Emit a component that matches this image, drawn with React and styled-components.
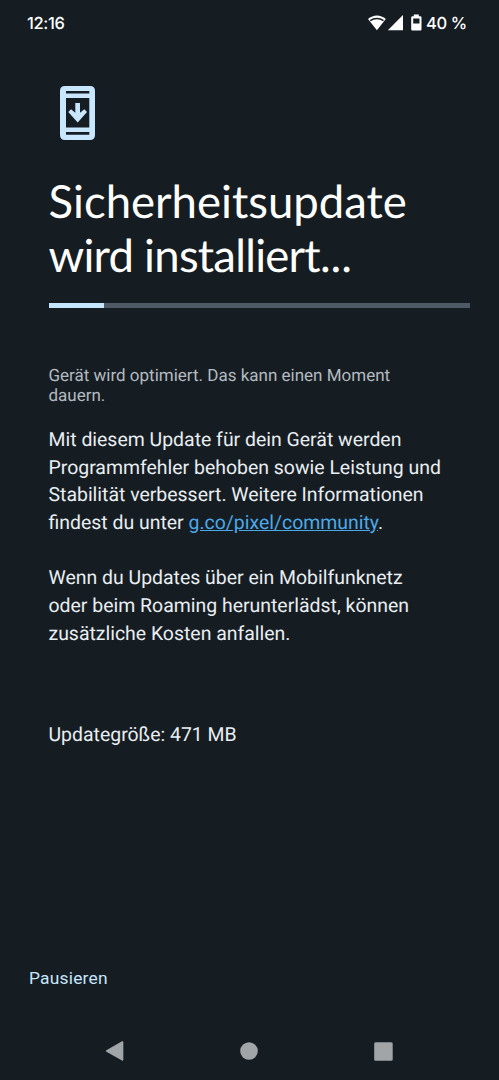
import React from "react";
import styled, { createGlobalStyle } from "styled-components";

const GlobalStyle = createGlobalStyle`
  * {
    box-sizing: border-box;
  }
  body {
    margin: 0;
    background: #161d22;
    text-rendering: geometricPrecision;
  }
`;

const Screen = styled.div`
  display: flex;
  flex-direction: column;
  width: 499px;
  height: 1080px;
  overflow: hidden;
  background: #161d22;
  color: #e9eef2;
  font-family: Roboto, "Liberation Sans", sans-serif;
`;

const StatusBar = styled.header`
  display: flex;
  align-items: center;
  justify-content: space-between;
  height: 45px;
  padding: 0 34px 0 27px;
  color: #fff;
  font-family: Inter, Roboto, sans-serif;
  font-size: 16.5px;
  font-weight: 500;
`;

const Clock = styled.span`
  letter-spacing: -0.35px;
`;

const StatusIcons = styled.div`
  display: flex;
  align-items: center;
`;

const Battery = styled.span`
  width: 39px;
  margin-left: 4px;
  letter-spacing: -0.4px;
  white-space: nowrap;
`;

const Content = styled.main`
  flex: 1;
  padding: 41px 29px 0 48.5px;
`;

const UpdateIcon = styled.svg`
  display: block;
  margin-left: 11.5px;
`;

const Title = styled.h1`
  margin: 34px 0 0;
  color: #fff;
  font-family: Lato, "Open Sans", sans-serif;
  font-size: 45.5px;
  font-weight: 400;
  line-height: 53.5px;
  white-space: nowrap;
`;

const TitleLine = styled.span`
  display: block;
  letter-spacing: ${(props) => props.$spacing || 0}px;
`;

const Dots = styled.span`
  letter-spacing: -0.1px;
`;

const Track = styled.div`
  height: 5px;
  margin-top: 22.4px;
  background: #4d5964;
`;

const Bar = styled.div`
  height: 100%;
  background: #c5e5fd;
`;

const Hint = styled.p`
  margin: 57.6px 0 0;
  color: #b3bac0;
  font-size: 17px;
  line-height: 20px;
  white-space: nowrap;
`;

const Text = styled.p`
  margin: ${(props) => props.$top}px 0 0;
  font-size: 19.44px;
  line-height: 27.7px;
  white-space: nowrap;
`;

const Link = styled.a`
  color: #4ca9e8;
  text-decoration: underline;
`;

const Footer = styled.footer`
  display: flex;
  align-items: center;
  height: 44px;
  padding-left: 29px;
`;

const PauseButton = styled.button`
  padding: 0;
  border: 0;
  background: none;
  color: #c5e5fd;
  font-family: inherit;
  font-size: 17.4px;
  font-weight: 400;
  letter-spacing: 0.2px;
`;

const NavBar = styled.nav`
  display: flex;
  align-items: center;
  justify-content: space-between;
  height: 58px;
  margin-top: 22px;
  padding: 0 106.500px 0 105px;
`;

const App = () => {
  const progress = 13.1;

  return (
    <Screen>
      <GlobalStyle />
      <StatusBar>
        <Clock>12:16</Clock>
        <StatusIcons>
          {/* wifi, signal, battery */}
          <svg width="54" height="18" viewBox="0 0 54 18" fill="#fff">
            <path d="M0 5C5.300 0.300 12.600 0.300 17.800 5L8.900 16.300Z" />
            <path
              d="M2.200 6.600C6.100 3.800 11.600 3.800 15.500 6.600"
              fill="none"
              stroke="#161d22"
              strokeWidth="1.4"
            />
            <path d="M35 1V16.300H19.800Z" />
            <path d="M45.800 0.500h5v1.800h1.500q1.200 0 1.200 1.200v11.800q0 1.200-1.200 1.200h-7.900q-1.200 0-1.200-1.200V3.500q0-1.200 1.200-1.200h1.400z" />
            <path d="M45.200 4.500h6.300v5h-6.300z" fill="#161d22" />
          </svg>
          <Battery>40 %</Battery>
        </StatusIcons>
      </StatusBar>

      <Content>
        <UpdateIcon width="35" height="54" viewBox="0 0 35 54" fill="#c9e6ff">
          <path
            fillRule="evenodd"
            d="M5 0h25q5 0 5 5v44q0 5-5 5H5q-5 0-5-5V5q0-5 5-5zM6 5v2.600h23.300V5zM6 12v29.500h23.300V12zM6 46v2.700h23.300V46z"
          />
          <path d="M15.300 17h4.700v9.700l4.300-3.400 2.700 2.700-9.300 10.500-9.400-10.500 2.700-2.700 4.300 3.400z" />
        </UpdateIcon>
        <Title>
          <TitleLine>Sicherheitsupdate</TitleLine>
          <TitleLine $spacing={-0.77}>
            wird installiert<Dots>...</Dots>
          </TitleLine>
        </Title>
        <Track>
          <Bar style={{ width: `${progress}%` }} />
        </Track>
        <Hint>
          Gerät wird optimiert. Das kann einen Moment
          <br />
          dauern.
        </Hint>
        <Text $top={20}>
          Mit diesem Update für dein Gerät werden
          <br />
          Programmfehler behoben sowie Leistung und
          <br />
          Stabilität verbessert. Weitere Informationen
          <br />
          findest du unter <Link>g.co/pixel/community</Link>.
        </Text>
        <Text $top={27.7}>
          Wenn du Updates über ein Mobilfunknetz
          <br />
          oder beim Roaming herunterlädst, können
          <br />
          zusätzliche Kosten anfallen.
        </Text>
        <Text $top={73}>Updategröße: 471 MB</Text>
      </Content>

      <Footer>
        <PauseButton>Pausieren</PauseButton>
      </Footer>
      <NavBar>
        <svg width="19" height="20" viewBox="0 0 19 20" fill="#a2a5a7">
          <path d="M17 0.300Q18.300-0.300 18.300 1.200V18.800Q18.300 20.300 17 19.600L1.400 10.700Q0.400 10 1.400 9.300Z" />
        </svg>
        <svg width="18" height="18" viewBox="0 0 18 18" fill="#a2a5a7">
          <circle cx="9" cy="9" r="8.800" />
        </svg>
        <svg width="19" height="19" viewBox="0 0 19 19" fill="#a2a5a7">
          <rect x="0.200" y="0.300" width="18.500" height="18.400" rx="1.500" />
        </svg>
      </NavBar>
    </Screen>
  );
};

export default App;
